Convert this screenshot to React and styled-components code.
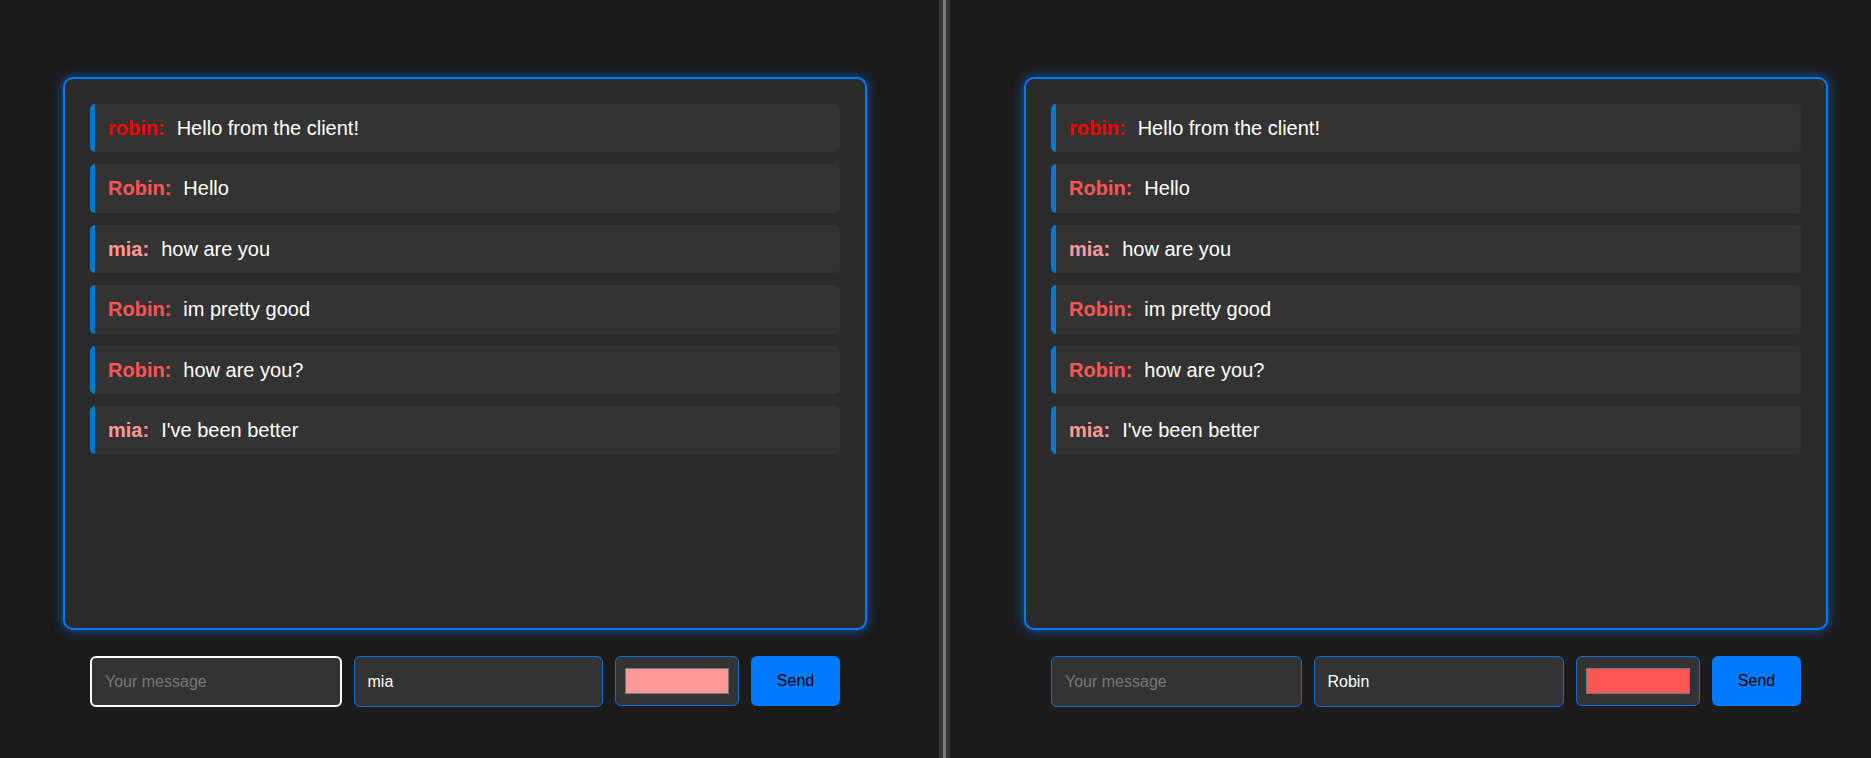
import React from 'react';
import styled, { createGlobalStyle } from 'styled-components';

const GlobalStyle = createGlobalStyle`
  html, body {
    margin: 0;
    padding: 0;
    background-color: #1b1b1b;
    font-family: "Liberation Sans", Arial, sans-serif;
  }
`;

const Split = styled.div`
  display: flex;
  width: 100%;
  height: 758px;
  overflow: hidden;
`;

const Pane = styled.div`
  box-sizing: border-box;
  width: ${props => props.width ? `${props.width}px` : 'auto'};
  flex: ${props => props.width ? 'none' : '1'};
  padding: 77px 0 0 ${props => props.offset}px;
  background-color: ${props => props.bg || '#1b1b1b'};
`;

const Divider = styled.div`
  flex: none;
  width: 11px;
  height: 100%;
  background-color: #363636;
  display: flex;
  justify-content: center;

  &::after {
    content: '';
    width: 3px;
    height: 100%;
    background-color: #7c7c7c;
  }
`;

const ChatBox = styled.div`
  box-sizing: border-box;
  width: 804px;
  height: 553px;
  padding: 25px;
  background-color: #2b2b2b;
  border: 2px solid #007bff;
  border-radius: 10px;
  box-shadow: 0 0 12px rgba(0, 123, 255, 0.65);
  display: flex;
  flex-direction: column;
  gap: 12px;
`;

const Message = styled.div`
  display: flex;
  align-items: center;
  padding: 12px 13px;
  line-height: 24.4px;
  font-size: 20px;
  color: #ffffff;
  background-color: #333333;
  border-left: 5px solid #007acc;
  border-radius: 5px;
`;

const Author = styled.span`
  font-weight: bold;
  color: ${props => props.color};
  margin-right: 12px;
`;

const Form = styled.form`
  display: flex;
  gap: 12px;
  margin: 26px 27px 0 27px;
  width: 750px;
`;

const TextInput = styled.input`
  box-sizing: border-box;
  flex: ${props => props.grow};
  min-width: 0;
  height: 51px;
  padding: 0 13px;
  font-family: "Liberation Sans", Arial, sans-serif;
  font-size: 16px;
  color: #ffffff;
  background-color: #333333;
  border: ${props => props.focused ? '2px solid #ffffff' : '1px solid #0a6fd8'};
  border-radius: 6px;
  outline: none;

  &::placeholder {
    color: #777777;
  }
`;

const ColorInput = styled.input`
  box-sizing: border-box;
  flex: none;
  width: 124px;
  height: 50px;
  padding: 11px 9px;
  background-color: #333333;
  border: 1px solid #0a6fd8;
  border-radius: 6px;
  cursor: pointer;

  &::-webkit-color-swatch-wrapper {
    padding: 0;
  }

  &::-webkit-color-swatch {
    border: 1px solid #777777;
    border-radius: 0;
  }
`;

const SendButton = styled.button`
  flex: none;
  width: 89px;
  height: 50px;
  font-family: "Liberation Sans", Arial, sans-serif;
  font-size: 16px;
  color: #000000;
  background-color: #007bff;
  border: none;
  border-radius: 6px;
  cursor: pointer;
`;

const messages = [
  { author: 'robin', color: '#ff0000', text: 'Hello from the client!' },
  { author: 'Robin', color: '#ff5555', text: 'Hello' },
  { author: 'mia', color: '#ff9999', text: 'how are you' },
  { author: 'Robin', color: '#ff5555', text: 'im pretty good' },
  { author: 'Robin', color: '#ff5555', text: 'how are you?' },
  { author: 'mia', color: '#ff9999', text: "I've been better" },
];

const ChatPane = ({ name, color, focused, width, offset, bg }) => (
  <Pane width={width} offset={offset} bg={bg}>
    <ChatBox>
      {messages.map((m, i) => (
        <Message key={i}>
          <Author color={m.color}>{m.author}:</Author>
          {m.text}
        </Message>
      ))}
    </ChatBox>
    <Form onSubmit={e => e.preventDefault()}>
      <TextInput grow="1" focused={focused} placeholder="Your message" />
      <TextInput grow="1" defaultValue={name} />
      <ColorInput type="color" defaultValue={color} />
      <SendButton type="submit">Send</SendButton>
    </Form>
  </Pane>
);

const App = () => (
  <>
    <GlobalStyle />
    <Split>
      <ChatPane name="mia" color="#ff9999" focused width={939} offset={63} bg="#1b1b1b" />
      <Divider />
      <ChatPane name="Robin" color="#ff5555" offset={74} bg="#1c1c1c" />
    </Split>
  </>
);

export default App;
